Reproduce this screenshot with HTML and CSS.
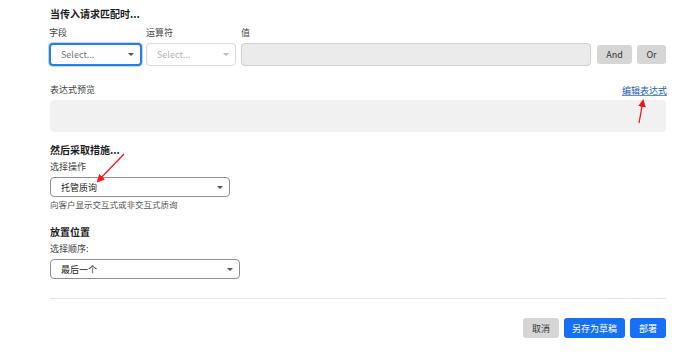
FILE: index.html
```html
<!DOCTYPE html>
<html>
  <head>
    <meta charset="utf-8">
    <title>规则</title>
    <link rel="stylesheet" href="styles.css">
  </head>
  <body>
    <div class="page">
      <h2 class="section-title first">当传入请求匹配时...</h2>
      <div class="match-row">
        <div class="col col-field">
          <label class="label">字段</label>
          <div class="select focused"><span>Select...</span><i class="caret"></i></div>
        </div>
        <div class="col col-op">
          <label class="label">运算符</label>
          <div class="select disabled"><span>Select...</span><i class="caret"></i></div>
        </div>
        <div class="col col-value">
          <label class="label">值</label>
          <div class="value-input"></div>
        </div>
        <button class="btn btn-gray btn-and">And</button>
        <button class="btn btn-gray btn-or">Or</button>
      </div>

      <div class="preview-head">
        <span class="label">表达式预览</span>
        <a class="link" href="#">编辑表达式</a>
      </div>
      <div class="preview-box"></div>

      <h2 class="section-title">然后采取措施...</h2>
      <label class="label">选择操作</label>
      <div class="select plain action-select"><span>托管质询</span><i class="caret"></i></div>
      <p class="help">向客户显示交互式或非交互式质询</p>

      <h2 class="section-title place">放置位置</h2>
      <label class="label">选择顺序:</label>
      <div class="select plain order-select"><span>最后一个</span><i class="caret"></i></div>

      <hr class="divider">

      <div class="footer">
        <button class="btn btn-gray btn-cancel">取消</button>
        <button class="btn btn-blue btn-draft">另存为草稿</button>
        <button class="btn btn-blue btn-deploy">部署</button>
      </div>
    </div>

    <svg class="arrows" width="689" height="354" viewBox="0 0 689 354">
      <defs>
        <marker id="head" markerWidth="8" markerHeight="8" refX="6" refY="4" orient="auto" markerUnits="userSpaceOnUse">
          <path d="M0,0 L8,4 L0,8 Z" fill="#f01818"/>
        </marker>
      </defs>
      <line x1="639" y1="123" x2="643" y2="101" stroke="#f01818" stroke-width="1.3" marker-end="url(#head)"/>
      <line x1="124" y1="154" x2="98" y2="181" stroke="#f01818" stroke-width="1.3" marker-end="url(#head)"/>
    </svg>
  </body>
</html>
```

FILE: styles.css
```css
body {
  margin: 0;
  font-family: "Noto Sans CJK SC", "Liberation Sans", sans-serif;
  color: #222;
  background: #fff;
}
.page {
  width: 616px;
  padding: 7px 0 0 50px;
}
.section-title {
  font-size: 10px;
  font-weight: bold;
  line-height: 14px;
  margin: 11px 0 0;
  color: #1d1d1d;
}
.section-title.first {
  margin-top: 0;
}
.section-title.place {
  margin-top: 15px;
}
.label {
  display: block;
  font-size: 9px;
  line-height: 12px;
  color: #444;
  margin-top: 4px;
}
.match-row {
  display: flex;
  align-items: flex-end;
  gap: 5px;
  margin-top: 6px;
}
.match-row .label {
  margin-top: 0;
  margin-bottom: 4px;
}
.col-field {
  width: 93px;
  margin-left: -1px;
}
.col-op {
  width: 90px;
  margin-left: -1px;
}
.col-value {
  flex: 1;
}
.select {
  box-sizing: border-box;
  display: flex;
  align-items: center;
  justify-content: space-between;
  border: 1px solid #c8c8c8;
  border-radius: 4px;
  background: #fff;
  font-size: 9px;
  padding: 0 6px 0 10px;
  height: 23px;
}
.select.focused {
  border: 2px solid #2a7de1;
  color: #777;
  box-shadow: 0 0 0 1px #bcd6f6;
}
.select.disabled {
  color: #b3b3b3;
  border-color: #d9d9d9;
}
.select.disabled .caret {
  border-top-color: #bbb;
}
.caret {
  width: 0;
  height: 0;
  border-left: 3px solid transparent;
  border-right: 3px solid transparent;
  border-top: 3px solid #555;
}
.value-input {
  box-sizing: border-box;
  height: 23px;
  border: 1px solid #cfcfcf;
  border-radius: 4px;
  background: #ebebeb;
}
.btn {
  font-family: inherit;
  font-size: 9px;
  height: 19px;
  border: none;
  border-radius: 3px;
  padding: 0;
  cursor: pointer;
}
.btn-gray {
  background: #d6d6d6;
  color: #333;
}
.btn-blue {
  background: #1670f5;
  color: #fff;
}
.btn-and {
  width: 35px;
  margin-left: 1px;
  margin-bottom: 2px;
}
.btn-or {
  width: 29px;
  margin-bottom: 2px;
}
.preview-head {
  display: flex;
  justify-content: space-between;
  align-items: center;
  margin-top: 18px;
  height: 12px;
}
.preview-head .label {
  margin-top: 0;
}
.link {
  font-size: 9px;
  color: #1e5bb8;
  text-decoration: underline;
  text-decoration-color: #5b8fd6;
  margin-right: -1px;
}
.preview-box {
  height: 32px;
  margin-top: 4px;
  background: #f1f1f1;
  border-radius: 4px;
}
.select.plain {
  border-color: #8f8f8f;
  color: #222;
  height: 20px;
  margin-top: 4px;
}
.action-select {
  width: 180px;
}
.order-select {
  width: 190px;
  margin-top: 3px;
}
.help {
  font-size: 8.5px;
  line-height: 12px;
  margin: 1px 0 0;
  color: #555;
}
.divider {
  border: none;
  height: 1px;
  background: #e3e3e3;
  margin: 19px 0 0;
}
.footer {
  display: flex;
  justify-content: flex-end;
  gap: 5px;
  margin-top: 19px;
}
.footer .btn {
  height: 20px;
}
.btn-cancel {
  width: 36px;
}
.btn-draft {
  width: 61px;
}
.btn-deploy {
  width: 36px;
}
.arrows {
  position: absolute;
  left: 0;
  top: 0;
  pointer-events: none;
}
```
